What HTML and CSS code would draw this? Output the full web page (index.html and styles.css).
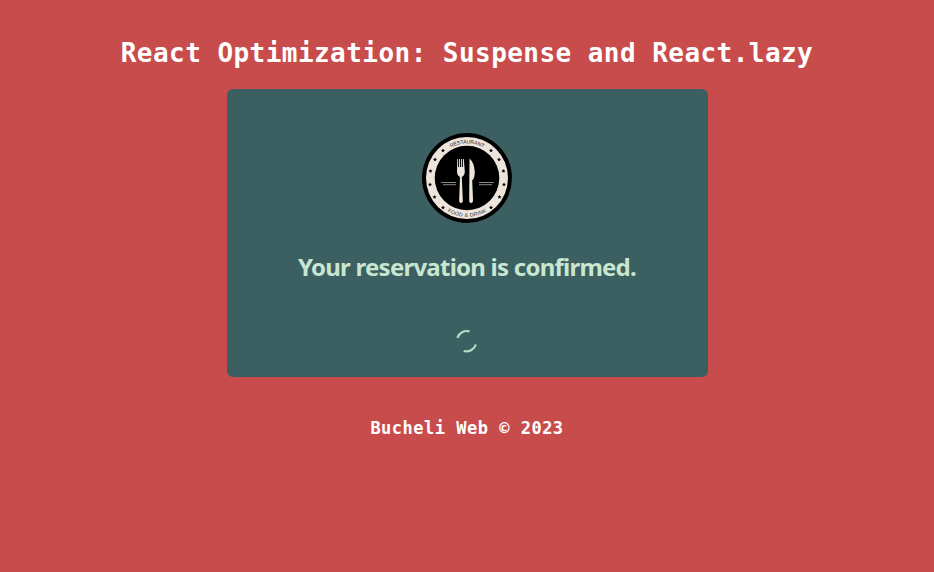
FILE: index.html
```html
<!DOCTYPE html>
<html lang="en">
<head>
<meta charset="utf-8">
<title>React Optimization</title>
<link rel="stylesheet" href="styles.css">
</head>
<body>
<main class="app">
  <h1 class="title">React Optimization: Suspense and React.lazy</h1>
  <section class="card">
    <svg class="logo" viewBox="0 0 90 90" role="img" aria-label="Restaurant food and drink">
      <defs>
        <path id="top-arc" d="M10.500 45a34.500 34.500 0 0 1 69 0"/>
        <path id="bottom-arc" d="M6.200 45a38.800 38.800 0 0 0 77.600 0"/>
        <path id="star" d="M0-2 .6-.7 2-.6 .9.4 1.2 1.8 0 1.1-1.2 1.8-.9.4-2-.6-.6-.7z"/>
      </defs>
      <circle cx="45" cy="45" r="45"/>
      <circle class="cream" cx="45" cy="45" r="41"/>
      <circle cx="45" cy="45" r="32.300"/>
      <text class="seal"><textPath href="#top-arc" startOffset="50%" textLength="34">RESTAURANT</textPath></text>
      <text class="seal"><textPath href="#bottom-arc" startOffset="50%" textLength="41">FOOD &amp; DRINK</textPath></text>
      <use href="#star" x="21" y="17.5"/><use href="#star" x="13" y="26.5"/><use href="#star" x="8.5" y="38"/><use href="#star" x="8" y="51.5"/><use href="#star" x="12.5" y="64"/><use href="#star" x="21" y="74.5"/>
      <use href="#star" x="69" y="17.5"/><use href="#star" x="77" y="26.5"/><use href="#star" x="81.5" y="38"/><use href="#star" x="82" y="51.5"/><use href="#star" x="77.5" y="64"/><use href="#star" x="69" y="74.5"/>
      <path class="cream" d="M35.300 26h.8v8h1v-8h.9v8h1v-8h.9v8h1v-8h.9l1 12.500q0 4-3 5.500L40.800 67q.2 3-1.800 3t-1.800-3l.8-23q-3-1.500-3-5.500z"/>
      <path class="cream" d="M47.500 25.500q4.700 4 5.200 13 .4 6-2.500 9L51 67q.1 3-1.900 3t-1.900-3z"/>
      <path class="rule" d="M19 49.500h15M21 51.700h13M57 49.500h15M57 51.700h13"/>
    </svg>
    <h2 class="message">Your reservation is confirmed.</h2>
    <svg class="spinner" viewBox="0 0 24 24" aria-hidden="true">
      <path d="M2.300 8.900A9.900 9.900 0 0 1 14.500 2.400M20.900 15.500A9.900 9.900 0 0 1 8.700 22"/>
    </svg>
  </section>
  <footer class="footer">Bucheli Web © 2023</footer>
</main>
</body>
</html>
```
FILE: styles.css
```css
body {
  margin: 0;
  background: #c94c4c;
}

.app {
  display: flex;
  flex-direction: column;
  align-items: center;
  min-height: 572px;
}

.title,
.footer {
  color: #fff;
  font-family: "DejaVu Sans Mono", monospace;
  font-weight: 700;
  white-space: nowrap;
}

.title {
  margin: 36px 0 0;
  font-size: 26px;
  line-height: 34px;
  letter-spacing: 0.45px;
}

.card {
  display: flex;
  flex-direction: column;
  align-items: center;
  box-sizing: border-box;
  width: 481px;
  height: 288.5px;
  margin-top: 18.5px;
  padding-top: 44px;
  border-radius: 6px;
  background: #3c6062;
}

.logo {
  width: 90px;
  height: 90px;
}

.cream {
  fill: #ede4dc;
}

.seal {
  font: 400 5.200px "Liberation Sans", sans-serif;
  fill: #292522;
  text-anchor: middle;
}

.rule {
  fill: none;
  stroke: #c9c2bb;
  stroke-width: 0.7;
}

.message {
  margin: 27.5px 0 0;
  color: #c8e6d0;
  font: 700 24px/34px "Noto Sans", sans-serif;
  letter-spacing: -0.76px;
  white-space: nowrap;
}

.spinner {
  width: 24px;
  height: 24px;
  margin-top: 45px;
  fill: none;
  stroke: #b5dcc5;
  stroke-width: 2.200;
}

.footer {
  margin-top: 38px;
  font-size: 17px;
  line-height: 26px;
  letter-spacing: 0.5px;
}
```
